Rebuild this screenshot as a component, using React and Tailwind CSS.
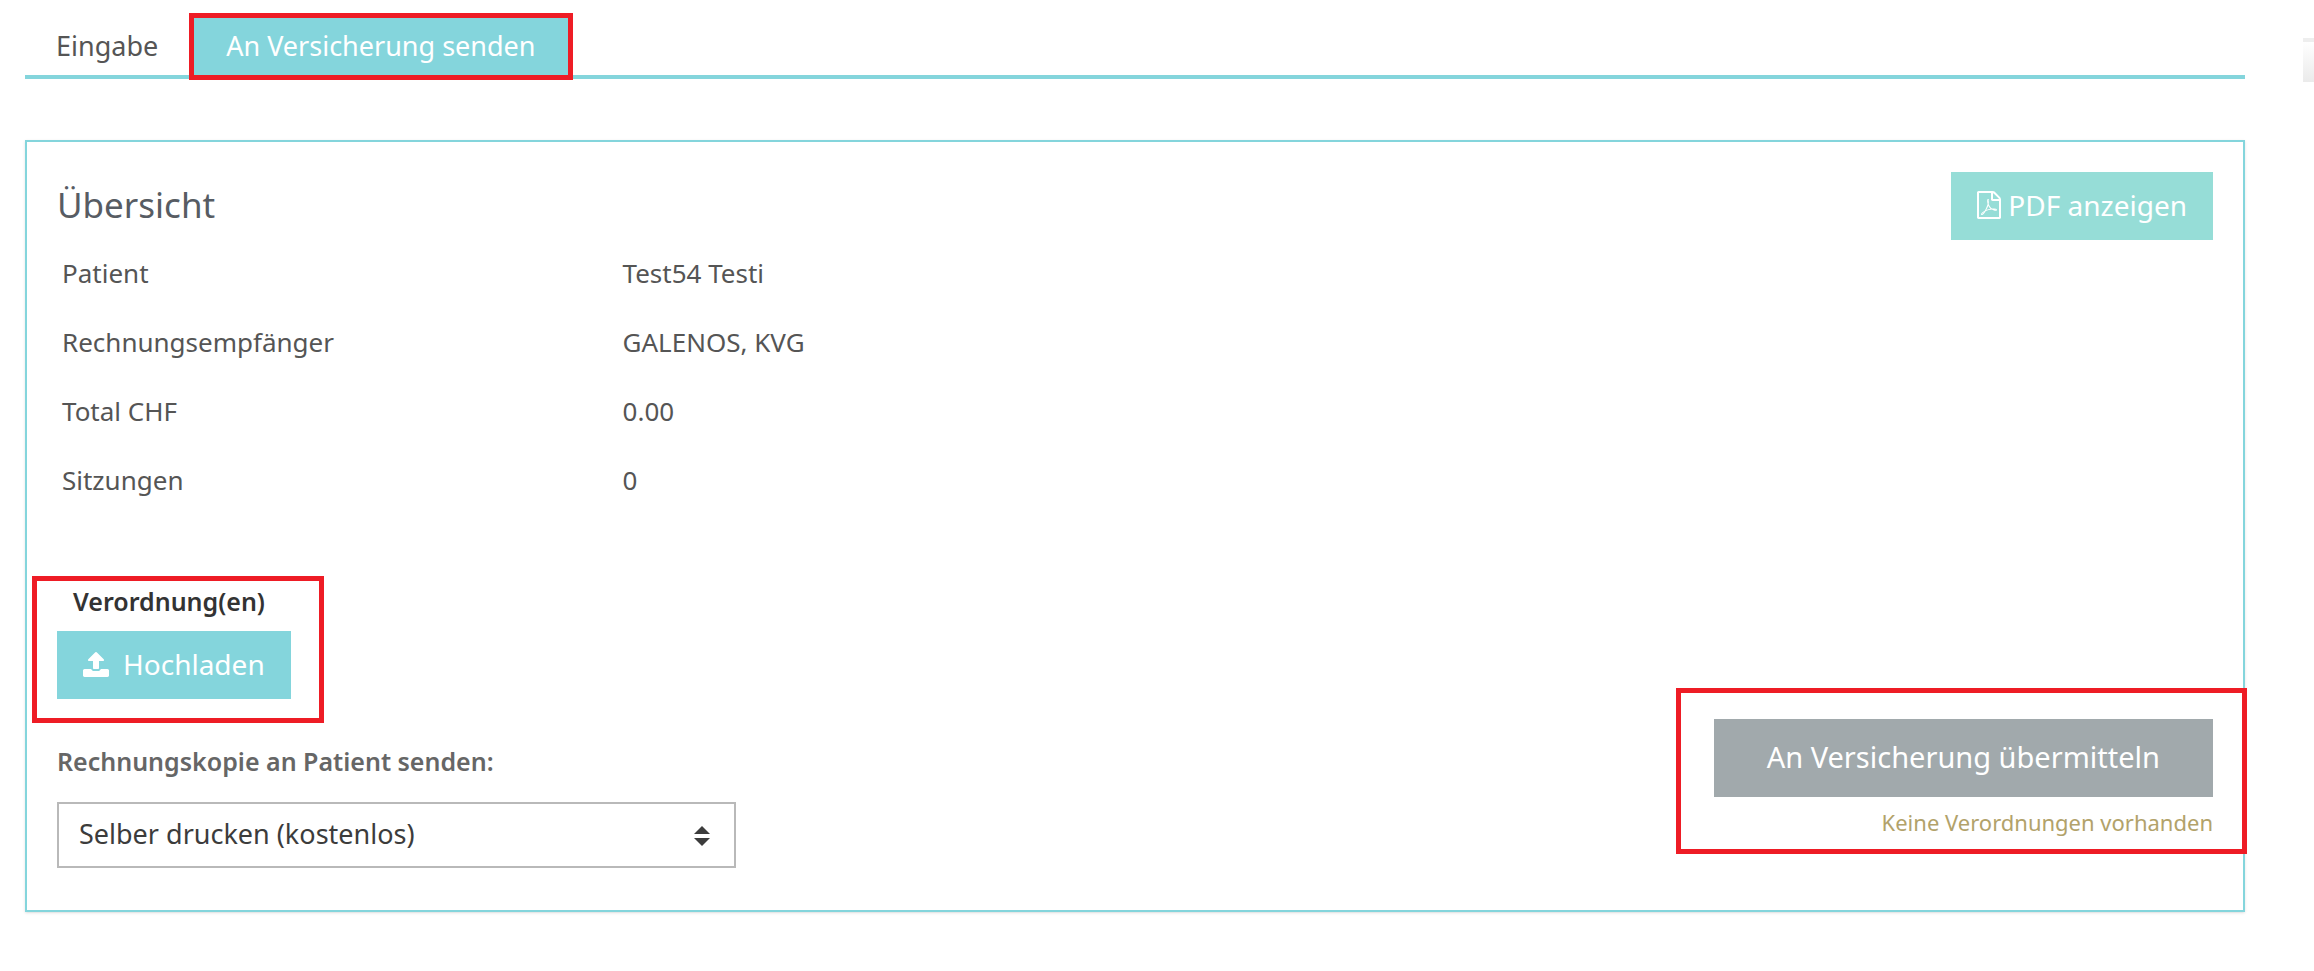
const overview = [
  ['Patient', 'Test54 Testi'],
  ['Rechnungsempfänger', 'GALENOS, KVG'],
  ['Total CHF', '0.00'],
  ['Sitzungen', '0'],
];

function FilePdfIcon() {
  return (
    <svg className="h-7 w-6 shrink-0" viewBox="0 -1536 1536 1792" fill="currentColor" aria-hidden="true">
      <g transform="scale(1,-1)">
        <path d="M1468 1156q28 -28 48 -76t20 -88v-1152q0 -40 -28 -68t-68 -28h-1344q-40 0 -68 28t-28 68v1600q0 40 28 68t68 28h896q40 0 88 -20t76 -48zM1024 1400v-376h376q-10 29 -22 41l-313 313q-12 12 -41 22zM1408 -128v1024h-416q-40 0 -68 28t-28 68v416h-768v-1536h1280zM894 465q33 -26 84 -56q59 7 117 7q147 0 177 -49q16 -22 2 -52q0 -1 -1 -2l-2 -2v-1q-6 -38 -71 -38q-48 0 -115 20t-130 53q-221 -24 -392 -83q-153 -262 -242 -262q-15 0 -28 7l-24 12q-1 1 -6 5q-10 10 -6 36q9 40 56 91.5t132 96.5q14 9 23 -6q2 -2 2 -4q52 85 107 197q68 136 104 262q-24 82 -30.5 159.5t6.5 127.5q11 40 42 40h21h1q23 0 35 -15q18 -21 9 -68q-2 -6 -4 -8q1 -3 1 -8v-30q-2 -123 -14 -192q55 -164 146 -238zM318 54q52 24 137 158q-51 -40 -87.5 -84t-49.5 -74zM716 974q-15 -42 -2 -132q1 7 7 44q0 3 7 43q1 4 4 8q-1 1 -1 2q-1 2 -1 3q-1 22 -13 36q0 -1 -1 -2v-2zM592 313q135 54 284 81q-2 1 -13 9.5t-16 13.5q-76 67 -127 176q-27 -86 -83 -197q-30 -56 -45 -83zM1238 329q-24 24 -140 24q76 -28 124 -28q14 0 18 1q0 1 -2 3z" />
      </g>
    </svg>
  );
}

function UploadIcon() {
  return (
    <svg className="h-[25px] w-[26px] shrink-0" viewBox="0 -1472 1664 1600" fill="currentColor" aria-hidden="true">
      <g transform="scale(1,-1)">
        <path d="M1280 64q0 -26 -19 -45t-45 -19t-45 19t-19 45t19 45t45 19t45 -19t19 -45zM1536 64q0 -26 -19 -45t-45 -19t-45 19t-19 45t19 45t45 19t45 -19t19 -45zM1664 288v-320q0 -40 -28 -68t-68 -28h-1472q-40 0 -68 28t-28 68v320q0 40 28 68t68 28h427q21 -56 70.5 -92t110.5 -36h256q61 0 110.5 36t70.5 92h427q40 0 68 -28t28 -68zM1339 936q-17 -40 -59 -40h-256v-448q0 -26 -19 -45t-45 -19h-256q-26 0 -45 19t-19 45v448h-256q-42 0 -59 40q-17 39 14 69l448 448q18 19 45 19t45 -19l448 -448q31 -30 14 -69z" />
      </g>
    </svg>
  );
}

export default function App() {
  return (
    <div className="flex min-h-screen items-start bg-white pl-[25px] font-['Noto_Sans',sans-serif] text-[#555555]">
      <main className="min-w-0 flex-1">
        <nav className="flex border-b-4 border-[#84d5dc] pt-[13px] text-[27px] leading-10">
          <a href="#eingabe" className="px-[31px] pt-[13px] pb-[9px]">
            Eingabe
          </a>
          <a href="#senden" aria-current="page" className="relative bg-[#84d5dc] px-[37px] pt-[13px] pb-[9px] text-white">
            An Versicherung senden
            <span className="pointer-events-none absolute inset-x-0 top-0 -bottom-[5px] border-[5px] border-[#ee1c25]" />
          </a>
        </nav>

        <section className="mt-[61px] border-2 border-[#84d5dc] px-[30px] pt-[30px] pb-[42px] shadow-sm">
          <header className="flex items-center justify-between">
            <h2 className="pb-[3px] text-[35px] leading-10 text-[#575c63]">Übersicht</h2>
            <button type="button" className="flex h-[68px] items-center gap-[7px] bg-[#96ddd7] px-[26px] pb-[2px] text-[28px] text-white">
              <FilePdfIcon />
              PDF anzeigen
            </button>
          </header>

          <table className="w-full table-fixed text-left text-[26px] leading-10">
            <tbody>
              {overview.map(([label, value]) => (
                <tr key={label} className="h-[69px]">
                  <th scope="row" className="w-[26%] pb-1 pl-[5px] font-normal">
                    {label}
                  </th>
                  <td className="pb-1 pl-[5px]">{value}</td>
                </tr>
              ))}
            </tbody>
          </table>

          <div className="mt-[65px] flex items-end justify-between">
            <div className="w-[679px] max-w-full">
              <div className="relative w-fit">
                <h3 className="pl-4 text-[25px] leading-10 font-semibold text-[#333333]">Verordnung(en)</h3>
                <button type="button" className="mt-[10px] flex h-[68px] items-center gap-[14px] bg-[#84d5dc] px-[26px] pb-[2px] text-[28px] text-white">
                  <UploadIcon />
                  Hochladen
                </button>
                <span className="pointer-events-none absolute -top-[5px] -right-[33px] -bottom-6 -left-[25px] border-[5px] border-[#ee1c25]" />
              </div>

              <label htmlFor="kopie" className="mt-[42px] block text-[25px] leading-10 font-semibold text-[#666666]">
                Rechnungskopie an Patient senden:
              </label>
              <div className="relative mt-[21px]">
                <select id="kopie" className="block h-[66px] w-full appearance-none border-2 border-[#b9b9b9] bg-white pb-[2px] pl-5 text-[27px] text-[#3c3c3c]">
                  <option>Selber drucken (kostenlos)</option>
                </select>
                <svg className="pointer-events-none absolute top-6 right-[26px] h-5 w-4" viewBox="0 0 16 20" fill="#3c3c3c" aria-hidden="true">
                  <path d="M8 0l8 8H0zM8 20l8-8H0z" />
                </svg>
              </div>
            </div>

            <div className="relative mb-7 text-right">
              <button type="button" className="flex h-[78px] items-center bg-[#a1a9ac] px-[53px] pb-[2px] text-[29px] text-white">
                An Versicherung übermitteln
              </button>
              <p className="mt-2 pb-px text-[22px] leading-[34px] text-[#b2a26a]">Keine Verordnungen vorhanden</p>
              <span className="pointer-events-none absolute -top-[31px] -right-[34px] -bottom-[14px] -left-[38px] border-[5px] border-[#ee1c25]" />
            </div>
          </div>
        </section>
      </main>

      <aside className="mt-[38px] ml-[58px] h-11 w-[11px] border-t-4 border-[#eeeeee] bg-linear-to-b from-white to-[#ebebeb]" />
    </div>
  );
}
